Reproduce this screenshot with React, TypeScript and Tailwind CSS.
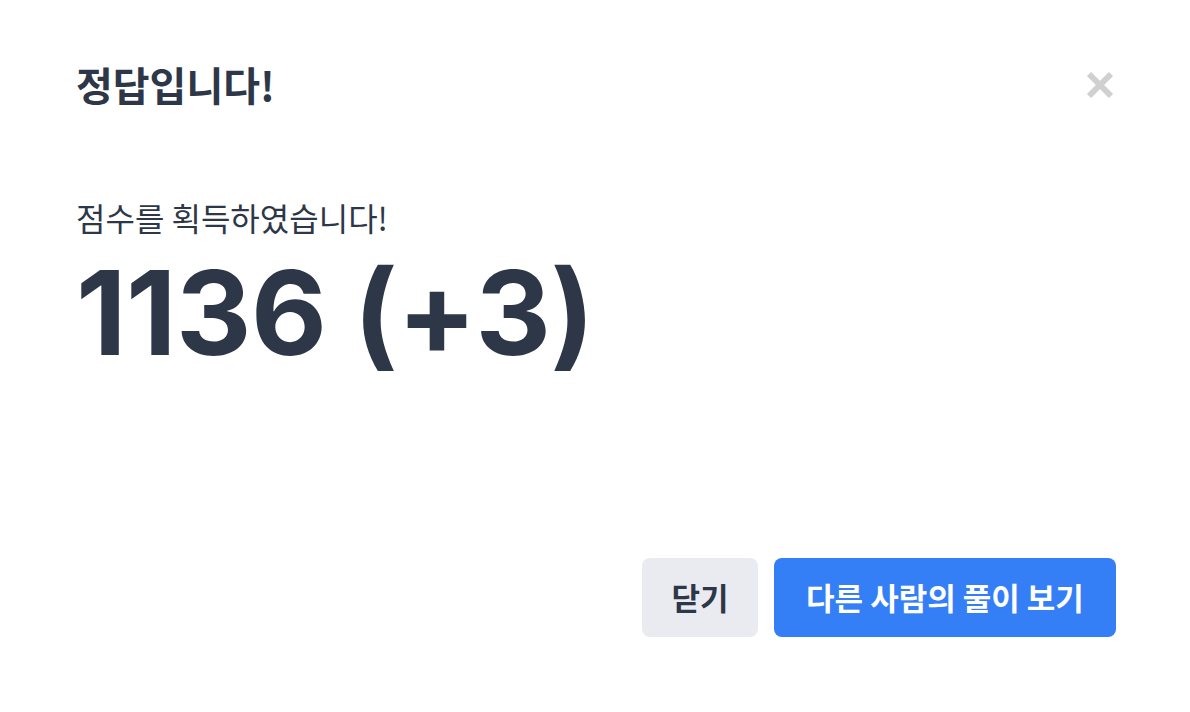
import React from "react";

export default function App() {
  return (
    <div
      className="w-[1190px] h-[712px] bg-white flex flex-col text-[#2d3748] pl-[76px] pr-[74px] pt-[57px] pb-[75px]"
      style={{ fontFamily: '"Noto Sans CJK KR", "Noto Sans", sans-serif' }}
    >
      <div className="flex items-start justify-between">
        <h1 className="text-[40px] font-bold leading-[54px]">정답입니다!</h1>
        <button className="mt-[11px] mr-[-1px] w-[34px] h-[34px] flex items-center justify-center">
          <svg width="28" height="28" viewBox="0 0 28 28">
            <path d="M3 3 L25 25 M25 3 L3 25" stroke="#d0d0d0" strokeWidth="6" strokeLinecap="butt" />
          </svg>
        </button>
      </div>
      <p className="mt-[83px] text-[32px] leading-[46px]">점수를 획득하였습니다!</p>
      <div
        className="text-[117px] font-bold leading-[140px] mt-[3px] tracking-[-0.5px]"
        style={{ fontFamily: 'Inter, "Noto Sans", sans-serif' }}
      >
        1136 (+3)
      </div>
      <div className="flex-1" />
      <div className="flex justify-end gap-[16px]">
        <button className="h-[79px] w-[116px] rounded-[8px] bg-[#e9ebf0] text-[31px] font-bold">닫기</button>
        <button className="h-[79px] w-[342px] rounded-[8px] bg-[#347ef6] text-white text-[31px] font-bold">
          다른 사람의 풀이 보기
        </button>
      </div>
    </div>
  );
}
